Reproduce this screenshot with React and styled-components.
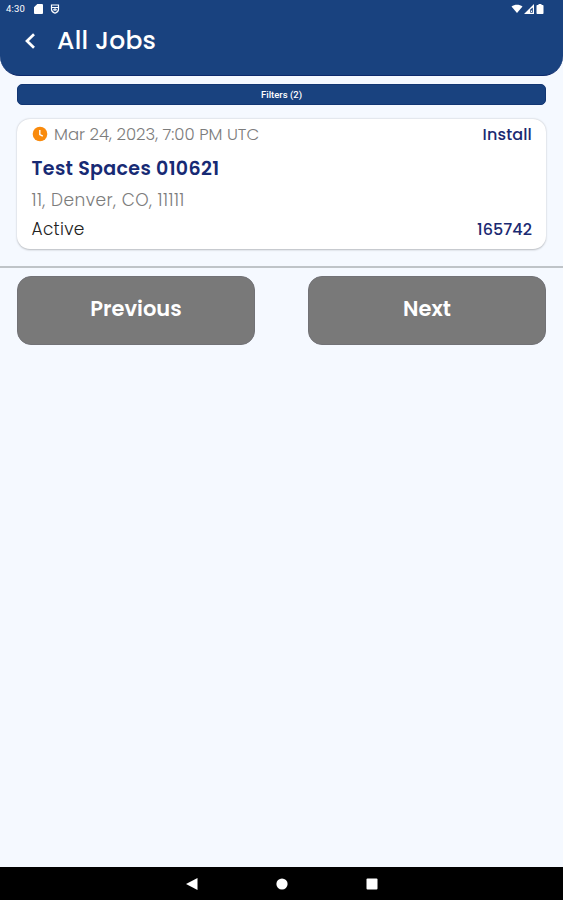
import React from 'react';
import styled, { createGlobalStyle } from 'styled-components';

const GlobalStyle = createGlobalStyle`
  * {
    box-sizing: border-box;
  }

  body {
    margin: 0;
    background-color: #f5f9ff;
    font-family: Poppins, Inter, sans-serif;
  }
`;

const Screen = styled.div`
  display: flex;
  flex-direction: column;
  height: 100vh;
  overflow: hidden;
`;

const Header = styled.header`
  height: 76px;
  background-color: #19427f;
  border-bottom: 1px solid #0d2a6c;
  border-radius: 0 0 20px 20px;
  color: #fff;
`;

const StatusBar = styled.div`
  display: flex;
  align-items: center;
  justify-content: space-between;
  height: 18px;
  padding: 0 18px 0 6px;
`;

const StatusGroup = styled.div`
  display: flex;
  align-items: center;
  gap: ${(props) => props.$gap || 0}px;

  svg {
    display: block;
  }
`;

const Time = styled.span`
  width: 20px;
  margin-right: 1px;
  font-family: Roboto, sans-serif;
  font-size: 9.5px;
  line-height: 18px;
  letter-spacing: 0.2px;
`;

const TitleRow = styled.div`
  display: flex;
  align-items: center;
  height: 45px;
  padding-left: 23px;
`;

const BackButton = styled.button`
  display: flex;
  width: 34px;
  padding: 0;
  border: none;
  background: none;
  color: #fff;
`;

const Title = styled.h1`
  margin: 0;
  font-size: 25px;
  font-weight: 500;
  line-height: 45px;
  letter-spacing: 0.2px;
`;

const Main = styled.main`
  flex: 1;
`;

const Filters = styled.button`
  display: block;
  width: 529px;
  height: 21px;
  margin: 8px 0 0 17px;
  padding: 0;
  border: 1px solid #123673;
  border-radius: 5px;
  background-color: #19427f;
  color: #fff;
  font-family: Roboto, sans-serif;
  font-size: 9.5px;
  font-weight: 500;
  line-height: 19px;
`;

const JobCard = styled.article`
  height: 130px;
  margin: 14px 17px 0;
  padding: 1px 14px 0 14.5px;
  border-radius: 13px;
  background-color: #fff;
  box-shadow: 0 0.5px 2px rgba(0, 0, 0, 0.26);
`;

const CardRow = styled.div`
  display: flex;
  align-items: center;
  justify-content: space-between;
  height: ${(props) => props.$height}px;
`;

const DateGroup = styled.div`
  display: flex;
  align-items: center;
  gap: 6px;

  svg {
    margin-left: -0.5px;
  }
`;

const Text = styled.span`
  color: ${(props) => props.$color};
  font-size: ${(props) => props.$size || 17}px;
  font-weight: ${(props) => props.$weight || 400};
  letter-spacing: ${(props) => props.$spacing || 0}px;
  white-space: nowrap;
`;

const Pager = styled.nav`
  display: flex;
  justify-content: space-between;
  margin-top: 17px;
  padding: 8px 17px 0;
  border-top: 2px solid #bfc4c8;
`;

const PageButton = styled.button`
  width: 238px;
  height: 69px;
  padding: 0 0 4px;
  border: 1px solid #727276;
  border-radius: 14px;
  background-color: #797979;
  color: #fff;
  font-family: inherit;
  font-size: 21px;
  font-weight: 600;
`;

const NavBar = styled.footer`
  display: flex;
  align-items: center;
  justify-content: center;
  gap: 78px;
  height: 33px;
  background-color: #000;
`;

const JobsPage = () => {
  return (
    <Screen>
      <GlobalStyle />
      <Header>
        <StatusBar>
          <StatusGroup $gap={7}>
            <Time>4:30</Time>
            <svg width="9" height="10" viewBox="0 0 9 10">
              <path fill="#fff" d="M3.3 0H8a1 1 0 0 1 1 1v8a1 1 0 0 1-1 1H1a1 1 0 0 1-1-1V3.3z" />
            </svg>
            <svg width="10" height="10" viewBox="0 0 10 10" fill="none" stroke="#fff">
              <path strokeWidth="1.2" d="M1.5 1h7v4.2c0 2-1.6 3.3-3.5 4-1.9-.7-3.5-2-3.5-4z" />
              <path strokeWidth="1" d="M2 3.5h6M3 5.8h4M5 3.5v3.5" />
            </svg>
          </StatusGroup>
          <StatusGroup $gap={1}>
            <svg width="12" height="10" viewBox="0 0 12 10">
              <path fill="#fff" d="M.5 2.5C3.5 0 8.500 0 11.500 2.500L6 9z" />
            </svg>
            <svg width="10" height="10" viewBox="0 0 10 10">
              <path fill="#fff" fillRule="evenodd" d="M10 0v10H0zM6.200 5.500v3.300h2.600V3.500z" />
              <path fill="#fff" d="M7 6.500h1v1.500H7z" />
            </svg>
            <svg width="10" height="10" viewBox="0 0 10 10">
              <path fill="#fff" d="M3.500 0h3v1h1.200c.5 0 .8.300.8.800v7.400c0 .5-.3.800-.8.800H2.300c-.5 0-.8-.3-.8-.8V1.800c0-.5.3-.8.8-.8h1.200z" />
            </svg>
          </StatusGroup>
        </StatusBar>
        <TitleRow>
          <BackButton aria-label="Back">
            <svg width="13" height="18" viewBox="0 0 13 18">
              <path d="M11 2.200L4 9l7 6.800" fill="none" stroke="#fff" strokeWidth="2.700" />
            </svg>
          </BackButton>
          <Title>All Jobs</Title>
        </TitleRow>
      </Header>
      <Main>
        <Filters>Filters (2)</Filters>
        <JobCard>
          <CardRow $height={28}>
            <DateGroup>
              <svg width="17" height="16" viewBox="0 0 17 16">
                <circle cx="9" cy="8" r="7.300" fill="#f98a0c" />
                <path d="M8.800 4v4.500l3 1.700" fill="none" stroke="#fff" strokeWidth="1.400" />
              </svg>
              <Text $color="#7c7c7c" $weight={300} $size={16.5}>Mar 24, 2023, 7:00 PM UTC</Text>
            </DateGroup>
            <Text $color="#1b2a72" $weight={500} $size={16} $spacing={0.15}>Install</Text>
          </CardRow>
          <CardRow $height={41}>
            <Text $color="#172a74" $weight={600} $size={19} $spacing={0.35}>Test Spaces 010621</Text>
          </CardRow>
          <CardRow $height={22}>
            <Text $color="#7c7c7c" $weight={300} $size={17} $spacing={0.47}>11, Denver, CO, 11111</Text>
          </CardRow>
          <CardRow $height={36}>
            <Text $color="#222" $weight={300} $spacing={0.3}>Active</Text>
            <Text $color="#1b2a72" $weight={500} $size={16} $spacing={0.05}>165742</Text>
          </CardRow>
        </JobCard>
        <Pager>
          <PageButton>Previous</PageButton>
          <PageButton>Next</PageButton>
        </Pager>
      </Main>
      <NavBar>
        <svg width="12" height="12" viewBox="0 0 12 12">
          <path d="M0 6L11.500 0v12z" fill="#fff" />
        </svg>
        <svg width="12" height="12" viewBox="0 0 12 12">
          <circle cx="6" cy="6" r="5.600" fill="#fff" />
        </svg>
        <svg width="12" height="12" viewBox="0 0 12 12">
          <rect x="0.500" y="0.500" width="11" height="11" rx="1" fill="#fff" />
        </svg>
      </NavBar>
    </Screen>
  );
};

export default JobsPage;
